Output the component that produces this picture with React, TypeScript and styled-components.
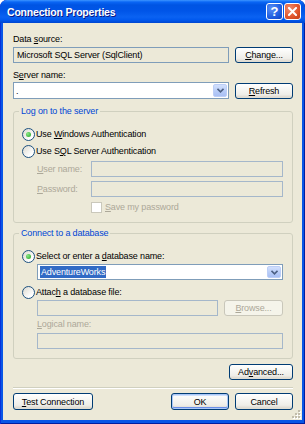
import styled, { createGlobalStyle } from 'styled-components'

const GlobalStyle = createGlobalStyle`
  html, body {
    margin: 0;
    padding: 0;
    background: #ffffff;
  }
  body {
    font-family: 'Liberation Sans', Arial, sans-serif;
  }
  * {
    box-sizing: border-box;
  }
`

const Window = styled.div`
  position: relative;
  width: 305px;
  height: 424px;
  display: flex;
  flex-direction: column;
  background: #0856e6;
  box-shadow: inset 1px 0 #0831d9, inset -1px 0 #001ea0, inset 0 -1px #001ea0;
  border-radius: 7px 7px 0 0;
  overflow: hidden;
`

const TitleBar = styled.div`
  height: 23px;
  flex-shrink: 0;
  display: flex;
  align-items: center;
  gap: 1px;
  padding: 0 4px 0 7px;
  border-radius: 7px 7px 0 0;
  background: linear-gradient(
    to bottom,
    #3d95ff 0px,
    #0a66f5 2px,
    #0054e3 5px,
    #0055e8 11px,
    #0a62f2 17px,
    #0058ee 20px,
    #0046cf 23px
  );
`

const Title = styled.div`
  flex: 1;
  color: #ffffff;
  font-weight: bold;
  font-size: 10.5px;
  letter-spacing: -0.2px;
  text-shadow: 1px 1px #0a1883;
  white-space: nowrap;
`

const CaptionButton = styled.div<{ $close?: boolean }>`
  width: 17px;
  height: 17px;
  border: 1px solid #ffffff;
  border-radius: 3px;
  display: flex;
  align-items: center;
  justify-content: center;
  color: #ffffff;
  font-weight: bold;
  font-size: 13px;
  background: ${p =>
    p.$close
      ? 'radial-gradient(circle at 30% 30%, #f08a6c, #e2582f 55%, #c23b12)'
      : 'radial-gradient(circle at 30% 30%, #5a8ff5, #2362e3 55%, #0f40c0)'};
`

const Client = styled.div`
  position: relative;
  flex: 1;
  margin: 0 3px 4px;
  background: #ece9d8;
  padding: 11px 9px 10px 10px;
  display: flex;
  flex-direction: column;
  font-size: 9px;
  letter-spacing: -0.15px;
`

const Label = styled.div<{ $disabled?: boolean; $mt?: number; $w?: number; $indent?: number }>`
  height: 11px;
  line-height: 11px;
  white-space: nowrap;
  color: ${p => (p.$disabled ? '#aca899' : '#000000')};
  margin-top: ${p => p.$mt ?? 0}px;
  margin-left: ${p => p.$indent ?? 0}px;
  ${p => (p.$w ? `width: ${p.$w}px; flex-shrink: 0;` : '')}
`

const U = styled.span`
  text-decoration: underline;
`

const Row = styled.div<{ $mt?: number; $indent?: number; $gap?: number; $align?: string }>`
  display: flex;
  align-items: ${p => p.$align ?? 'flex-start'};
  gap: ${p => p.$gap ?? 6}px;
  margin-top: ${p => p.$mt ?? 0}px;
  margin-left: ${p => p.$indent ?? 0}px;
`

const TextBox = styled.div<{ $variant?: 'normal' | 'readonly' | 'disabled' }>`
  flex: 1;
  height: 16px;
  border: 1px solid ${p => (p.$variant === 'disabled' ? '#a5b7ca' : '#7f9db9')};
  background: ${p => (p.$variant === 'normal' ? '#ffffff' : '#ece9d8')};
  padding: 0 3px;
  line-height: 14px;
  white-space: nowrap;
  overflow: hidden;
`

const Combo = styled.div<{ $h?: number }>`
  flex: 1;
  height: ${p => p.$h ?? 16}px;
  display: flex;
  border: 1px solid #7f9db9;
  background: #ffffff;
  padding: 1px;
`

const ComboText = styled.div`
  flex: 1;
  display: flex;
  align-items: center;
  padding-left: 1px;
  white-space: nowrap;
`

const Selected = styled.span`
  background: #316ac5;
  color: #ffffff;
  line-height: 12px;
  padding: 0 1px;
`

const DropButton = styled.div`
  width: 14px;
  border: 1px solid #bccef7;
  border-radius: 2px;
  background: linear-gradient(to bottom, #d2e0fd, #b6cbf7 60%, #a9c0f4);
  display: flex;
  align-items: center;
  justify-content: center;
`

const Button = styled.button<{ $w: number; $h?: number; $default?: boolean }>`
  width: ${p => p.$w}px;
  height: ${p => p.$h ?? 16}px;
  flex-shrink: 0;
  padding: 0;
  font-family: inherit;
  font-size: 9px;
  letter-spacing: -0.15px;
  color: #000000;
  border: 1px solid #003c74;
  border-radius: 3px;
  background: linear-gradient(to bottom, #ffffff 0%, #f7f7f4 35%, #eeede8 75%, #d8d2c7 100%);
  box-shadow: ${p =>
    p.$default
      ? 'inset 0 0 0 1px #aac7f7, inset 0 1px 0 1px #cee0fc, inset 0 -1px 0 1px #6a8ee8'
      : 'inset 0 -1px 0 #e0ddd3'};

  &:disabled {
    border-color: #c9c7ba;
    background: #f5f4ea;
    color: #aca899;
    box-shadow: none;
  }
`

const Group = styled.fieldset<{ $mt: number }>`
  margin: ${p => p.$mt}px 0 0;
  padding: 11px 9px 9px 8px;
  border: 1px solid #d0d0bf;
  border-radius: 3px;
  min-width: 0;
  display: flex;
  flex-direction: column;
`

const Legend = styled.legend`
  padding: 0 2px;
  margin-left: -3px;
  line-height: 11px;
  color: #0046d5;
`

const Option = styled.div<{ $mt?: number }>`
  height: 13px;
  display: flex;
  align-items: center;
  gap: 1px;
  margin-top: ${p => p.$mt ?? 0}px;
`

const OptionText = styled.span`
  white-space: nowrap;
  line-height: 11px;
`

const RadioCircle = styled.span<{ $checked?: boolean }>`
  width: 13px;
  height: 13px;
  flex-shrink: 0;
  border: 1px solid #1c5180;
  border-radius: 50%;
  background: linear-gradient(135deg, #dcd9ce, #ffffff 75%);
  display: flex;
  align-items: center;
  justify-content: center;

  &::after {
    content: '';
    display: ${p => (p.$checked ? 'block' : 'none')};
    width: 5px;
    height: 5px;
    border-radius: 50%;
    background: radial-gradient(circle at 35% 35%, #8ae887, #21a121);
  }
`

const CheckBox = styled.span`
  width: 11px;
  height: 11px;
  flex-shrink: 0;
  border: 1px solid #cac8bb;
  background: #ffffff;
`

const Separator = styled.div`
  height: 2px;
  margin-top: 7px;
  border-top: 1px solid #d0d0bf;
  border-bottom: 1px solid #ffffff;
`

const Footer = styled.div`
  display: flex;
  margin-top: 4px;
  gap: 6px;
`

const Spacer = styled.div`
  flex: 1;
`

const Grip = styled.svg`
  position: absolute;
  right: 1px;
  bottom: 1px;
`

function Chevron() {
  return (
    <svg width="7" height="5" viewBox="0 0 7 5">
      <polyline points="0.5,0.8 3.5,3.8 6.5,0.8" fill="none" stroke="#4d6185" strokeWidth="1.6" />
    </svg>
  )
}

function SizeGrip() {
  const dots = [
    [6, 0],
    [3, 3],
    [6, 3],
    [0, 6],
    [3, 6],
    [6, 6],
  ]
  return (
    <Grip width="9" height="9" viewBox="0 0 9 9">
      {dots.map(([x, y], i) => (
        <g key={i}>
          <rect x={x + 1} y={y + 1} width="2" height="2" fill="#ffffff" />
          <rect x={x} y={y} width="2" height="2" fill="#c1bcab" />
        </g>
      ))}
    </Grip>
  )
}

export default function App() {
  return (
    <>
      <GlobalStyle />
      <Window>
        <TitleBar>
          <Title>Connection Properties</Title>
          <CaptionButton>?</CaptionButton>
          <CaptionButton $close>
            <svg width="9" height="9" viewBox="0 0 9 9">
              <path d="M1 1 L8 8 M8 1 L1 8" stroke="#ffffff" strokeWidth="2" strokeLinecap="square" />
            </svg>
          </CaptionButton>
        </TitleBar>

        <Client>
          <Label>
            Data <U>s</U>ource:
          </Label>
          <Row $mt={2}>
            <TextBox $variant="readonly">Microsoft SQL Server (SqlClient)</TextBox>
            <Button $w={58}>
              <U>C</U>hange...
            </Button>
          </Row>

          <Label $mt={7}>
            S<U>e</U>rver name:
          </Label>
          <Row $mt={1} $align="flex-end">
            <Combo $h={17}>
              <ComboText>.</ComboText>
              <DropButton>
                <Chevron />
              </DropButton>
            </Combo>
            <Button $w={58}>
              <U>R</U>efresh
            </Button>
          </Row>

          <Group $mt={7}>
            <Legend>Log on to the server</Legend>
            <Option>
              <RadioCircle $checked />
              <OptionText>
                Use <U>W</U>indows Authentication
              </OptionText>
            </Option>
            <Option $mt={4}>
              <RadioCircle />
              <OptionText>
                Use S<U>Q</U>L Server Authentication
              </OptionText>
            </Option>
            <Row $mt={3} $indent={15} $gap={0} $align="center">
              <Label $disabled $w={54}>
                <U>U</U>ser name:
              </Label>
              <TextBox $variant="disabled" />
            </Row>
            <Row $mt={4} $indent={15} $gap={0} $align="center">
              <Label $disabled $w={54}>
                <U>P</U>assword:
              </Label>
              <TextBox $variant="disabled" />
            </Row>
            <Row $mt={5} $indent={69} $gap={3} $align="center">
              <CheckBox />
              <Label $disabled>
                <U>S</U>ave my password
              </Label>
            </Row>
          </Group>

          <Group $mt={5}>
            <Legend>Connect to a database</Legend>
            <Option>
              <RadioCircle $checked />
              <OptionText>
                Select or enter a <U>d</U>atabase name:
              </OptionText>
            </Option>
            <Row $mt={1} $indent={15}>
              <Combo>
                <ComboText>
                  <Selected>AdventureWorks</Selected>
                </ComboText>
                <DropButton>
                  <Chevron />
                </DropButton>
              </Combo>
            </Row>
            <Option $mt={6}>
              <RadioCircle />
              <OptionText>
                Attac<U>h</U> a database file:
              </OptionText>
            </Option>
            <Row $mt={1} $indent={15}>
              <TextBox $variant="disabled" />
              <Button $w={59} disabled>
                <U>B</U>rowse...
              </Button>
            </Row>
            <Label $disabled $mt={3} $indent={15}>
              <U>L</U>ogical name:
            </Label>
            <Row $mt={3} $indent={15}>
              <TextBox $variant="disabled" />
            </Row>
          </Group>

          <Row $mt={5}>
            <Spacer />
            <Button $w={64}>
              Ad<U>v</U>anced...
            </Button>
          </Row>

          <Separator />

          <Footer>
            <Button $w={80} $h={17}>
              <U>T</U>est Connection
            </Button>
            <Spacer />
            <Button $w={58} $h={17} $default>
              OK
            </Button>
            <Button $w={58} $h={17}>
              Cancel
            </Button>
          </Footer>

          <SizeGrip />
        </Client>
      </Window>
    </>
  )
}
